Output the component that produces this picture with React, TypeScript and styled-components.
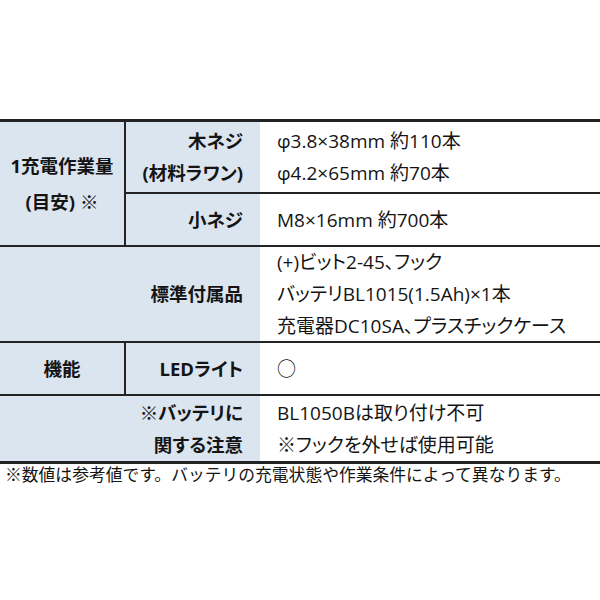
import React from "react";
import styled, { createGlobalStyle, css } from "styled-components";

const Global = createGlobalStyle`
  html, body { margin: 0; padding: 0; background: #fff; }
  body {
    font-family: "Open Sans", "Noto Sans CJK JP", sans-serif;
    font-feature-settings: "palt";
    color: #141414;
  }
`;

const LINE = "#232323";
const LABEL_BG = "#dbe5ef";

const Page = styled.div`
  width: 600px;
  height: 600px;
  padding-top: 119px;
  box-sizing: border-box;
`;

const Grid = styled.div`
  display: grid;
  grid-template-columns: 126px 134px 1fr;
  grid-template-rows: 72px 53px 96px 53px 65px;
  border-top: 3px solid ${LINE};
  border-bottom: 3px solid ${LINE};
`;

type CellProps = {
  $col: string;
  $row: string;
  $kind: "group" | "label" | "value";
  $line?: boolean;
  $divider?: boolean;
};

const Cell = styled.div<CellProps>`
  grid-column: ${(p) => p.$col};
  grid-row: ${(p) => p.$row};
  box-sizing: border-box;
  display: flex;
  flex-direction: column;
  justify-content: center;
  white-space: nowrap;
  border-bottom: ${(p) => (p.$line ? `2px solid ${LINE}` : "none")};
  border-right: ${(p) => (p.$divider ? `2px solid ${LINE}` : "none")};
  line-height: 32px;
  ${(p) =>
    p.$kind === "value"
      ? css`
          background: #fff;
          font-size: 19px;
          padding-left: 17px;
          align-items: flex-start;
        `
      : css`
          background: ${LABEL_BG};
          font-size: 18.5px;
          font-weight: 700;
          align-items: ${p.$kind === "group" ? "center" : "flex-end"};
          padding-right: ${p.$kind === "group" ? "0" : "17px"};
          text-align: ${p.$kind === "group" ? "center" : "right"};
        `}
`;

const GroupLines = styled.div`
  line-height: 36px;
`;

const Note = styled.p`
  margin: 0;
  padding-left: 5px;
  font-size: 16.8px;
  line-height: 22px;
  white-space: nowrap;
  font-feature-settings: normal;
`;

export default function App() {
  return (
    <Page>
      <Global />
      <Grid>
        <Cell $col="1" $row="1 / 3" $kind="group" $line $divider>
          <GroupLines>
            <div>1充電作業量</div>
            <div>(目安) ※</div>
          </GroupLines>
        </Cell>
        <Cell $col="2" $row="1" $kind="label" $line>
          <div>木ネジ</div>
          <div>(材料ラワン)</div>
        </Cell>
        <Cell $col="3" $row="1" $kind="value" $line>
          <div>φ3.8×38mm 約110本</div>
          <div>φ4.2×65mm 約70本</div>
        </Cell>
        <Cell $col="2" $row="2" $kind="label" $line>
          <div>小ネジ</div>
        </Cell>
        <Cell $col="3" $row="2" $kind="value" $line>
          <div>M8×16mm 約700本</div>
        </Cell>

        <Cell $col="1 / 3" $row="3" $kind="label" $line>
          <div>標準付属品</div>
        </Cell>
        <Cell $col="3" $row="3" $kind="value" $line>
          <div>(+)ビット2-45、フック</div>
          <div>バッテリBL1015(1.5Ah)×1本</div>
          <div>充電器DC10SA、プラスチックケース</div>
        </Cell>

        <Cell $col="1" $row="4" $kind="group" $line $divider>
          <div>機能</div>
        </Cell>
        <Cell $col="2" $row="4" $kind="label" $line>
          <div>LEDライト</div>
        </Cell>
        <Cell $col="3" $row="4" $kind="value" $line>
          <div>○</div>
        </Cell>

        <Cell $col="1 / 3" $row="5" $kind="label">
          <div>※バッテリに</div>
          <div>関する注意</div>
        </Cell>
        <Cell $col="3" $row="5" $kind="value">
          <div>BL1050Bは取り付け不可</div>
          <div>※フックを外せば使用可能</div>
        </Cell>
      </Grid>
      <Note>※数値は参考値です。バッテリの充電状態や作業条件によって異なります。</Note>
    </Page>
  );
}
